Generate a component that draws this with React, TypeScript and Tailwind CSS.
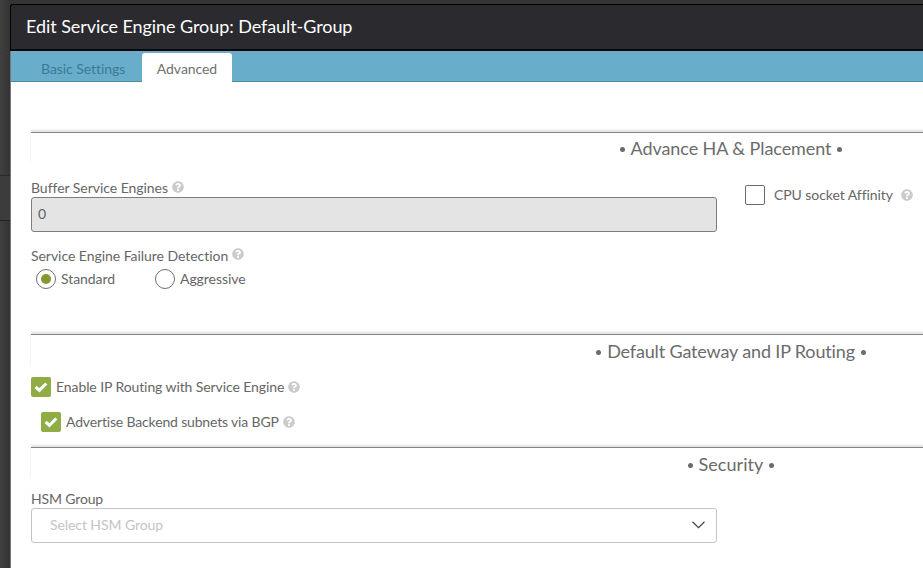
import type { ReactNode } from 'react';
import { FaQuestionCircle } from 'react-icons/fa';

function Help({ className = '' }: { className?: string }) {
  return <FaQuestionCircle className={`size-[12px] shrink-0 text-[#cbcbcb] ${className}`} />;
}

function SectionTitle({ children, spacing }: { children: ReactNode; spacing: string }) {
  return (
    <div className="flex h-[33px] w-[1400px] items-start justify-center border-t border-[#858585] shadow-[0_-2px_2px_rgba(0,0,0,0.12)]">
      <h2 className={`flex items-center text-[18px] text-[#6b6b6b] ${spacing}`}>
        <span className="mt-[2px] mr-[6px] size-[5px] rounded-full bg-[#6b6b6b]" />
        <span>{children}</span>
        <span className="mt-[2px] ml-[6px] size-[5px] rounded-full bg-[#6b6b6b]" />
      </h2>
    </div>
  );
}

function Radio({ label, checked, spacing }: { label: string; checked?: boolean; spacing: string }) {
  return (
    <label className="flex h-5 items-center gap-[5px]">
      <span className="flex size-5 items-center justify-center rounded-full border border-[#6e6e6e] bg-white">
        {checked && <span className="size-[10px] rounded-full bg-[#83982f]" />}
      </span>
      <span className={spacing}>{label}</span>
    </label>
  );
}

function CheckedBox() {
  return (
    <span className="flex size-5 shrink-0 items-center justify-center rounded-[2px] bg-[#8fac45]">
      <svg viewBox="0 0 20 20" className="size-5" fill="none" stroke="white" strokeWidth="3">
        <path d="M4.6 9.8 8.4 13.4 15.3 6.5" />
      </svg>
    </span>
  );
}

export default function App() {
  return (
    <div className="flex h-[568px] w-[923px] overflow-hidden bg-[#353535] font-[Lato,sans-serif] text-[14px] leading-5 text-[#666] [font-variant-ligatures:none]">
      <div className="flex w-[10px] shrink-0 flex-col bg-linear-to-r from-[#404040] to-[#333]">
        <div className="h-[54px] border-b border-[#453636]" />
        <div className="h-[122px] border-b border-[#292929]" />
        <div className="h-[45px] border-b border-[#222] bg-[#3c3c3c]" />
      </div>
      <div className="mt-[4px] flex w-[913px] flex-col">
        <header className="flex h-[47px] shrink-0 items-center rounded-tl-[3px] border-t border-b-2 border-l border-t-black border-b-[#050b13] border-l-black bg-[#2b2a2f] pb-[2px] pl-[15px]">
          <h1 className="text-[18px] leading-6 tracking-[-0.07px] text-white">Edit Service Engine Group: Default-Group</h1>
        </header>
        <div className="flex min-h-0 grow flex-col border-l border-[#777] bg-white">
          <nav className="flex h-[31px] shrink-0 items-end border-b border-[#4d8ba4] bg-[#68adca] shadow-[inset_0_2px_0_#79a9be]">
            <div className="flex h-[29px] w-[131px] items-center pl-[30px] text-[#3b7b97]">
              <span className="pt-[4px] tracking-[-0.05px]">Basic Settings</span>
            </div>
            <div className="-mb-px flex h-[29px] w-[90px] items-center justify-center rounded-t-[3px] bg-white text-[#707070]">
              <span className="pt-[3px] tracking-[-0.06px]">Advanced</span>
            </div>
          </nav>

          <main className="flex flex-col overflow-hidden pl-[20px]">
            <section className="flex flex-col pt-[50px]">
              <SectionTitle spacing="leading-[30px] tracking-[-0.08px]">Advance HA &amp; Placement</SectionTitle>
              <div className="flex gap-[28px] pt-[13px]">
                <div className="flex w-[686px] shrink-0 flex-col">
                  <div className="flex h-[19px] items-center gap-[4px]">
                    <span className="tracking-[-0.04px]">Buffer Service Engines</span>
                    <Help className="-mt-[2px]" />
                  </div>
                  <div className="flex h-[35px] items-center rounded-[3px] border border-[#7d7d7d] bg-[#e4e4e4] px-[6px] pb-[2px] text-[#5f5f5f]">0</div>
                  <div className="mt-[14px] flex h-5 items-center gap-[4px]">
                    <span className="tracking-[-0.04px]">Service Engine Failure Detection</span>
                    <Help className="-mt-[5px]" />
                  </div>
                  <div className="mt-[3px] flex gap-[40px] pl-[5px]">
                    <Radio label="Standard" checked spacing="tracking-[-0.07px]" />
                    <Radio label="Aggressive" spacing="tracking-[-0.06px]" />
                  </div>
                </div>
                <div className="flex h-5 items-center pt-[14px]">
                  <span className="size-5 rounded-[2px] border border-[#6a6a6a]" />
                  <span className="ml-[9px] tracking-[-0.07px] whitespace-nowrap">CPU socket Affinity</span>
                  <Help className="ml-[8px]" />
                </div>
              </div>
            </section>

            <section className="flex flex-col pt-[45px]">
              <SectionTitle spacing="leading-[32px] tracking-[-0.15px]">Default Gateway and IP Routing</SectionTitle>
              <div className="mt-[10px] flex h-5 items-center">
                <CheckedBox />
                <span className="ml-[5px] tracking-[-0.09px]">Enable IP Routing with Service Engine</span>
                <Help className="ml-[4px]" />
              </div>
              <div className="mt-[15px] flex h-5 items-center pl-[10px]">
                <CheckedBox />
                <span className="ml-[5px] tracking-[-0.16px]">Advertise Backend subnets via BGP</span>
                <Help className="ml-[4px]" />
              </div>
            </section>

            <section className="flex flex-col pt-[15px]">
              <SectionTitle spacing="leading-[32px] tracking-[0.06px]">Security</SectionTitle>
              <div className="h-[28px] pt-[9px] tracking-[-0.15px]">HSM Group</div>
              <div className="flex h-[35px] w-[686px] items-center justify-between rounded-[3px] border border-[#c4c4c4] pr-[11px] pl-[18px]">
                <span className="pb-px tracking-[-0.08px] text-[#c4c4c4]">Select HSM Group</span>
                <svg viewBox="0 0 13 8" className="mb-px h-[8px] w-[13px]" fill="none" stroke="#444" strokeWidth="1.2">
                  <path d="M.5.8 6.5 6.6 12.5.8" />
                </svg>
              </div>
            </section>
          </main>
        </div>
      </div>
    </div>
  );
}
